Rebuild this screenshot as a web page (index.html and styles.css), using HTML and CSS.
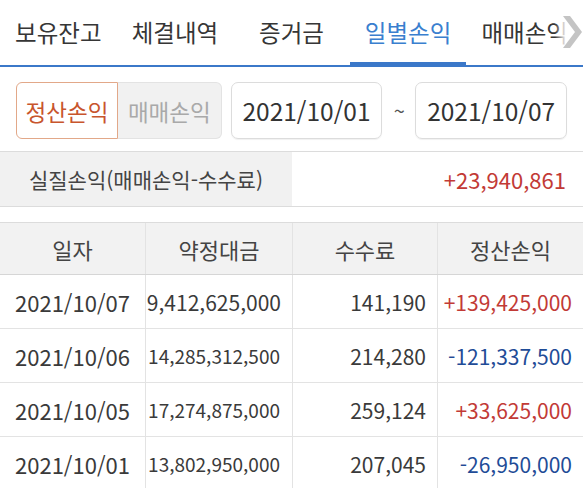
FILE: index.html
```html
<!DOCTYPE html>
<html lang="ko">
<head>
<meta charset="utf-8">
<link rel="stylesheet" href="styles.css">
</head>
<body>
<div class="tabs">
  <div class="tab">보유잔고</div>
  <div class="tab">체결내역</div>
  <div class="tab">증거금</div>
  <div class="tab active">일별손익</div>
  <div class="tab">매매손익</div>
  <div class="more"><svg width="22" height="40" viewBox="0 0 22 40"><polygon points="2,4 9,4 21,20 9,36 2,36 14,20" fill="#c4c4c4"/></svg></div>
</div>
<div class="controls">
  <div class="toggle">
    <div class="opt on">정산손익</div>
    <div class="opt off">매매손익</div>
  </div>
  <div class="date">2021/10/01</div>
  <div class="tilde">~</div>
  <div class="date">2021/10/07</div>
</div>
<div class="summary">
  <div class="sum-label">실질손익(매매손익-수수료)</div>
  <div class="sum-value up">+23,940,861</div>
</div>
<div class="table">
  <div class="row head">
    <div class="cell c">일자</div>
    <div class="cell c">약정대금</div>
    <div class="cell c">수수료</div>
    <div class="cell c">정산손익</div>
  </div>
  <div class="row">
    <div class="cell c">2021/10/07</div>
    <div class="cell r">9,412,625,000</div>
    <div class="cell r">141,190</div>
    <div class="cell r up">+139,425,000</div>
  </div>
  <div class="row">
    <div class="cell c">2021/10/06</div>
    <div class="cell r small">14,285,312,500</div>
    <div class="cell r">214,280</div>
    <div class="cell r down">-121,337,500</div>
  </div>
  <div class="row">
    <div class="cell c">2021/10/05</div>
    <div class="cell r small">17,274,875,000</div>
    <div class="cell r">259,124</div>
    <div class="cell r up">+33,625,000</div>
  </div>
  <div class="row">
    <div class="cell c">2021/10/01</div>
    <div class="cell r small">13,802,950,000</div>
    <div class="cell r">207,045</div>
    <div class="cell r down">-26,950,000</div>
  </div>
</div>
</body>
</html>
```
FILE: styles.css
```css
* { box-sizing: border-box; }
html, body { margin: 0; padding: 0; background: #fff; }
body {
  width: 583px;
  height: 488px;
  overflow: hidden;
  font-family: "Noto Sans CJK KR", "Noto Sans", sans-serif;
  color: #3a3a3a;
}
.tabs {
  position: relative;
  display: flex;
  height: 67px;
  border-bottom: 2px solid #3b78c9;
}
.tab {
  flex: 1 1 0;
  display: flex;
  align-items: center;
  justify-content: center;
  font-size: 23.5px;
  color: #363636;
  padding-bottom: 2px;
  white-space: nowrap;
  position: relative;
}
.tab.active { color: #3a7fcf; }
.tab.active::after {
  content: "";
  position: absolute;
  left: 0; right: 0; bottom: -2px;
  height: 5px;
  background: #3b78c9;
}
.more {
  position: absolute;
  right: 0; top: 12px;
  width: 28px;
  height: 40px;
  display: flex;
  justify-content: flex-end;
  background: linear-gradient(to right, rgba(255,255,255,0), #fff 40%);
}
.controls {
  display: flex;
  align-items: center;
  padding: 15px 16px 0 16px;
  height: 72px;
}
.toggle {
  display: flex;
  width: 206px;
  height: 57px;
}
.opt {
  display: flex;
  align-items: center;
  justify-content: center;
  font-size: 22.5px;
}
.opt.on {
  width: 102px;
  border: 1px solid #e2a889;
  border-radius: 6px 0 0 6px;
  color: #c8552d;
  background: #fff;
}
.opt.off {
  flex: 1;
  border: 1px solid #e3e3e3;
  border-left: none;
  border-radius: 0 6px 6px 0;
  background: #f1f1f1;
  color: #a9a9a9;
}
.date {
  margin-left: 9px;
  width: 152px;
  height: 57px;
  border: 1px solid #dcdcdc;
  border-radius: 7px;
  display: flex;
  align-items: center;
  justify-content: center;
  font-size: 24.5px;
  color: #333;
  box-shadow: 0 1px 1px rgba(0,0,0,0.06);
}
.tilde {
  margin-left: 10px;
  font-size: 20px;
  color: #555;
  width: 14px;
  text-align: center;
}
.summary {
  display: flex;
  margin-top: 12px;
  height: 56px;
  border-top: 1px solid #dcdcdc;
  border-bottom: 1px solid #dcdcdc;
}
.sum-label {
  width: 292px;
  background: #f1f1f1;
  display: flex;
  align-items: center;
  justify-content: center;
  font-size: 21px;
  color: #444;
}
.sum-value {
  flex: 1;
  display: flex;
  align-items: center;
  justify-content: flex-end;
  padding-right: 17px;
  font-size: 22px;
}
.up { color: #c23a36; }
.down { color: #1f4c97; }
.table {
  margin-top: 15px;
  border-top: 1px solid #dcdcdc;
}
.row {
  display: grid;
  grid-template-columns: 145px 147px 145px 1fr;
  height: 54px;
  border-bottom: 1px solid #e3e3e3;
}
.row.head {
  height: 52px;
  background: #f2f2f2;
  border-bottom: 1px solid #d6d6d6;
}
.cell {
  display: flex;
  align-items: center;
  font-size: 21px;
  border-left: 1px solid #e3e3e3;
  white-space: nowrap;
}
.cell:first-child { border-left: none; }
.head .cell { font-size: 22px; color: #444; }
.cell.c { justify-content: center; font-size: 22px; }
.cell.r { justify-content: flex-end; padding-right: 11px; }
.cell.small { font-size: 19px; padding-right: 12px; }
```
